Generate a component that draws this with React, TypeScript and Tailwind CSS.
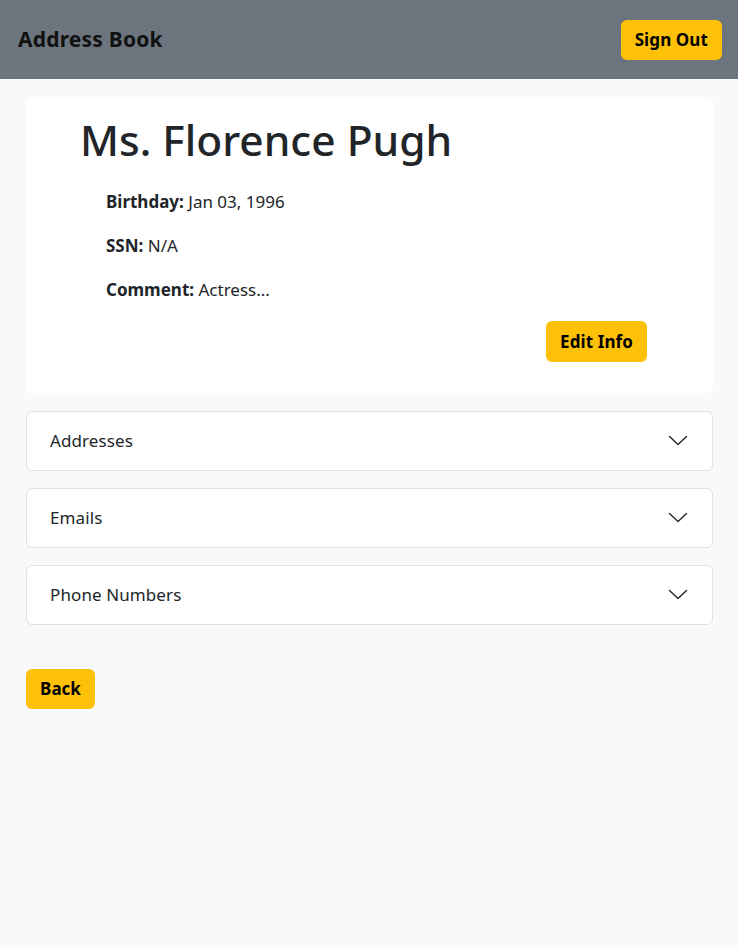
import React from 'react';

const Chevron: React.FC = () => (
  <svg width="20" height="20" viewBox="0 0 20 20" fill="none" stroke="#212529" strokeWidth="1.4" strokeLinecap="round" strokeLinejoin="round">
    <path d="M1.5 5.5 L10 13.5 L18.5 5.5" />
  </svg>
);

const Section: React.FC<{ title: string }> = ({ title }) => (
  <div className="h-[60px] flex items-center justify-between bg-white border border-[#dee2e6] rounded-md pl-[23px] pr-[24px]">
    <span className="text-[17px] tracking-[0.1px] text-[#212529]">{title}</span>
    <Chevron />
  </div>
);

const App: React.FC = () => {
  return (
    <div className="min-h-[948px] bg-[#f8f9fa] text-[#212529]" style={{ fontFamily: '"Noto Sans", sans-serif' }}>
      <nav className="h-[79px] bg-[#6c757d] flex items-center justify-between pl-[18px] pr-[16px]">
        <span className="text-[21px] font-bold text-[#111] tracking-[0.2px]">Address Book</span>
        <button className="h-[40px] px-[14px] rounded-md bg-[#ffc107] text-[17px] font-bold text-black tracking-[0.1px]">
          Sign Out
        </button>
      </nav>

      <main className="pl-[26px] pr-[25px] pt-[18px] flex flex-col">
        <div className="bg-white rounded-md h-[296px] pl-[54px] pr-[66px] pt-[14px] flex flex-col">
          <h1 className="text-[42.5px] leading-[58px] font-medium text-[#212529]">Ms. Florence Pugh</h1>
          <div className="pl-[26px] mt-[20px] flex flex-col gap-[18px] text-[17px] leading-[26px]">
            <p><span className="font-bold">Birthday:</span> Jan 03, 1996</p>
            <p><span className="font-bold">SSN:</span> N/A</p>
            <p><span className="font-bold">Comment:</span> Actress...</p>
          </div>
          <div className="flex justify-end mt-[18px]">
            <button className="h-[41px] w-[101px] rounded-md bg-[#ffc107] text-[17px] font-bold text-black tracking-[0.1px]">
              Edit Info
            </button>
          </div>
        </div>

        <div className="mt-[18px] flex flex-col gap-[17px]">
          <Section title="Addresses" />
          <Section title="Emails" />
          <Section title="Phone Numbers" />
        </div>

        <div className="mt-[44px]">
          <button className="h-[40px] w-[69px] rounded-md bg-[#ffc107] text-[17px] font-bold text-black">
            Back
          </button>
        </div>
      </main>
    </div>
  );
};

export default App;
